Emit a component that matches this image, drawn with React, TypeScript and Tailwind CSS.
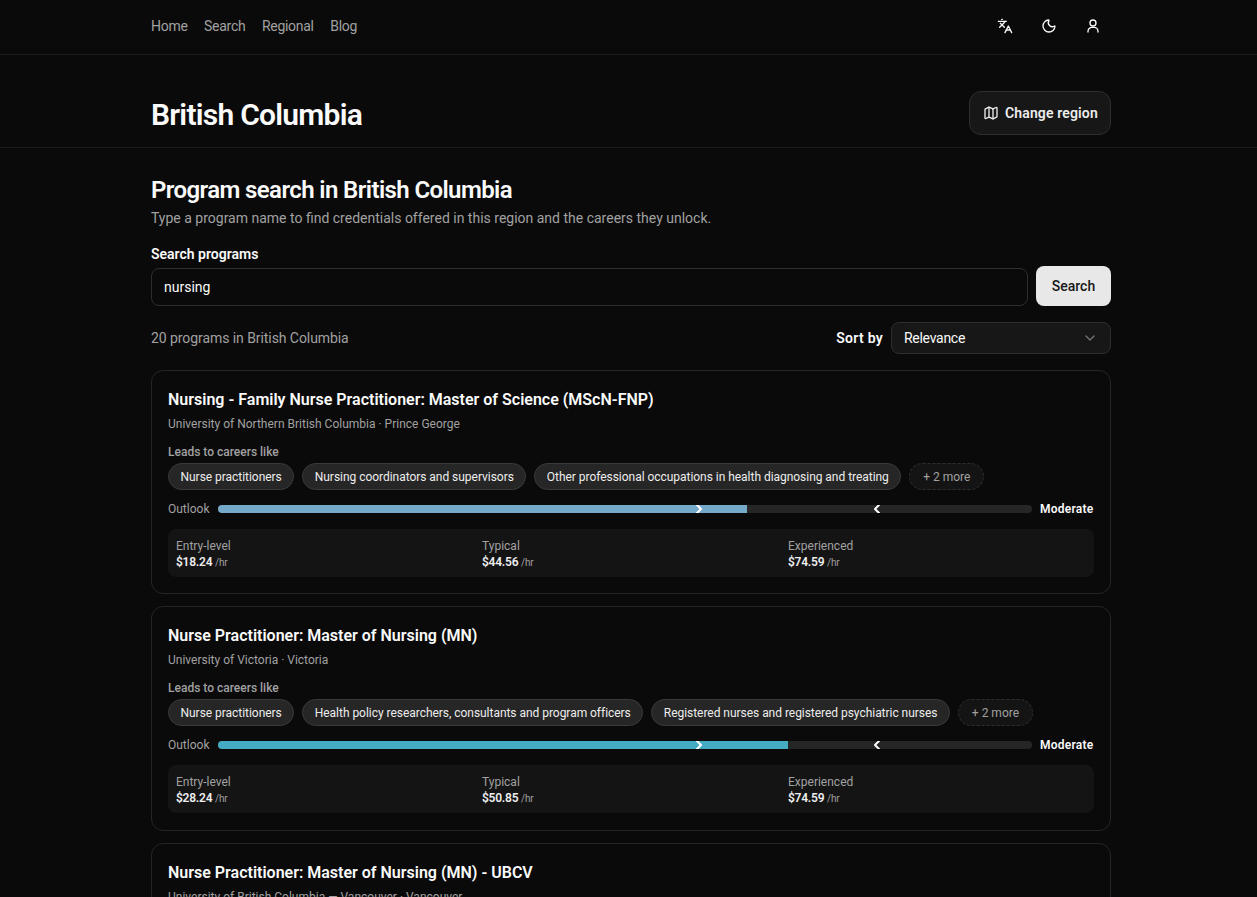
import { ChevronDown, ChevronLeft, ChevronRight, Languages, Map, Moon } from 'lucide-react'

const programs = [
  {
    title: 'Nursing - Family Nurse Practitioner: Master of Science (MScN-FNP)',
    school: 'University of Northern British Columbia · Prince George',
    careers: ['Nurse practitioners', 'Nursing coordinators and supervisors', 'Other professional occupations in health diagnosing and treating'],
    fill: 65,
    fillClass: 'bg-[#74a9c9]',
    wages: ['$18.24', '$44.56', '$74.59'],
  },
  {
    title: 'Nurse Practitioner: Master of Nursing (MN)',
    school: 'University of Victoria · Victoria',
    careers: ['Nurse practitioners', 'Health policy researchers, consultants and program officers', 'Registered nurses and registered psychiatric nurses'],
    fill: 70,
    fillClass: 'bg-[#45abc3]',
    wages: ['$28.24', '$50.85', '$74.59'],
  },
  {
    title: 'Nurse Practitioner: Master of Nursing (MN) - UBCV',
    school: 'University of British Columbia — Vancouver · Vancouver',
    careers: ['Nurse practitioners'],
    fill: 70,
    fillClass: 'bg-[#45abc3]',
    wages: ['$28.24', '$50.85', '$74.59'],
  },
]

const wageLabels = ['Entry-level', 'Typical', 'Experienced']

function AccountIcon() {
  return (
    <svg viewBox="0 0 24 24" fill="none" stroke="currentColor" strokeWidth={2} strokeLinecap="round" strokeLinejoin="round" className="h-4 w-4">
      <circle cx="12" cy="7.5" r="4.5" />
      <path d="M4.5 21v-1a6 6 0 0 1 6-6h3a6 6 0 0 1 6 6v1" />
    </svg>
  )
}

function ProgramCard({ program }: { program: (typeof programs)[number] }) {
  return (
    <div className="rounded-xl border border-[#262626] bg-[#0a0a0a] px-4 pt-[17px] pb-[16.4px]">
      <h3 className="text-[16px] leading-6 font-semibold text-[#fafafa]">{program.title}</h3>
      <p className="mt-1 text-[12px] leading-4 text-[#a1a1a1]">{program.school}</p>
      <p className="mt-3 text-[12px] leading-4 font-medium text-[#a1a1a1]">Leads to careers like</p>
      <div className="mt-[3px] flex items-center gap-2">
        {program.careers.map((career) => (
          <span key={career} className="flex h-[27px] items-center rounded-full border border-[#3a3a3a] bg-[#262626] px-[11.5px] text-[12px] tracking-[-0.003em] whitespace-nowrap text-[#ededed]">
            {career}
          </span>
        ))}
        <span className="flex h-[27px] w-[75px] items-center justify-center rounded-full border border-dashed border-[#2e2e2e] bg-[#141414] text-[12px] whitespace-nowrap text-[#a1a1a1]">
          + 2 more
        </span>
      </div>
      <div className="mt-[11px] flex items-center gap-2">
        <span className="w-[42px] text-[12px] leading-4 text-[#a1a1a1]">Outlook</span>
        <div className="relative h-2 flex-1 overflow-hidden rounded-full bg-[#262626]">
          <div className={`h-full ${program.fillClass}`} style={{ width: `${program.fill}%` }} />
          <ChevronRight className="absolute top-1/2 left-[58.1%] h-4 w-4 -translate-y-1/2 text-white" strokeWidth={3} />
          <ChevronLeft className="absolute top-1/2 left-[80%] h-4 w-4 -translate-y-1/2 text-white" strokeWidth={3} />
        </div>
        <span className="w-[54px] text-[12px] leading-4 font-semibold tracking-[0.02em] text-[#fafafa]">Moderate</span>
      </div>
      <div className="mt-3 grid grid-cols-3 gap-2 rounded-lg bg-[#141414] px-2 pt-[9px] pb-[7px]">
        {program.wages.map((wage, i) => (
          <div key={wageLabels[i]}>
            <p className="text-[12px] leading-4 text-[#a1a1a1]">{wageLabels[i]}</p>
            <p className="text-[12px] leading-4 font-semibold tracking-[-0.02em] text-[#ededed]">
              {wage} <span className="text-[10px] leading-none font-normal text-[#a1a1a1]">/hr</span>
            </p>
          </div>
        ))}
      </div>
    </div>
  )
}

export default function App() {
  return (
    <div className="h-screen overflow-hidden bg-[#0a0a0a] font-['Roboto',sans-serif] text-[#fafafa]">
      {/* Nav */}
      <header className="h-[55px] border-b border-[#1c1c1c] pl-[5px]">
        <div className="mx-auto flex h-full w-[960px] items-center justify-between pb-[2px]">
          <nav className="flex items-center gap-[16.5px] text-[14px] tracking-[-0.02em] text-[#a1a1a1]">
            <span>Home</span>
            <span>Search</span>
            <span>Regional</span>
            <span>Blog</span>
          </nav>
          <div className="flex items-center gap-[28px] pr-[10px] text-[#fafafa]">
            <Languages className="h-4 w-4" />
            <Moon className="h-4 w-4" />
            <AccountIcon />
          </div>
        </div>
      </header>

      {/* Region title */}
      <section className="h-[93px] border-b border-[#1c1c1c] pl-[5px]">
        <div className="mx-auto flex h-full w-[960px] items-end justify-between pb-3">
          <h1 className="pb-[2px] text-[30px] leading-9 font-semibold tracking-tight">British Columbia</h1>
          <button className="flex h-[44px] w-[142px] items-center gap-[6px] rounded-xl border border-[#2e2e2e] bg-[#171717] pl-[13px] text-[14px] font-semibold tracking-[0.01em] text-[#ededed]">
            <Map className="h-4 w-4" />
            Change region
          </button>
        </div>
      </section>

      <main className="pl-[5px]">
        <div className="mx-auto w-[960px] pt-[26px]">
          <h2 className="text-[24px] leading-8 font-semibold tracking-tight">Program search in British Columbia</h2>
          <p className="mt-[2px] text-[14px] leading-5 text-[#a1a1a1]">
            Type a program name to find credentials offered in this region and the careers they unlock.
          </p>

          <label className="mt-[16px] block text-[14px] leading-5 font-semibold">Search programs</label>
          <div className="mt-[2px] flex items-end gap-2">
            <div className="flex h-[38px] flex-1 items-center rounded-lg border border-[#2e2e2e] bg-[#0a0a0a] px-3 text-[14px]">nursing</div>
            <button className="h-10 w-[75px] rounded-lg bg-[#e8e8e8] text-[14px] font-medium text-[#171717]">Search</button>
          </div>

          <div className="mt-4 flex items-center justify-between">
            <p className="text-[14px] tracking-[-0.005em] text-[#a1a1a1]">20 programs in British Columbia</p>
            <div className="flex items-center gap-2">
              <span className="text-[14px] font-semibold tracking-[0.02em]">Sort by</span>
              <div className="flex h-8 w-[220px] items-center justify-between rounded-lg border border-[#2e2e2e] bg-[#171717] px-3 text-[14px] tracking-[-0.02em]">
                Relevance
                <ChevronDown className="h-4 w-4 text-[#737373]" />
              </div>
            </div>
          </div>

          <div className="mt-4 flex flex-col gap-3">
            {programs.map((program) => (
              <ProgramCard key={program.title} program={program} />
            ))}
          </div>
        </div>
      </main>
    </div>
  )
}
